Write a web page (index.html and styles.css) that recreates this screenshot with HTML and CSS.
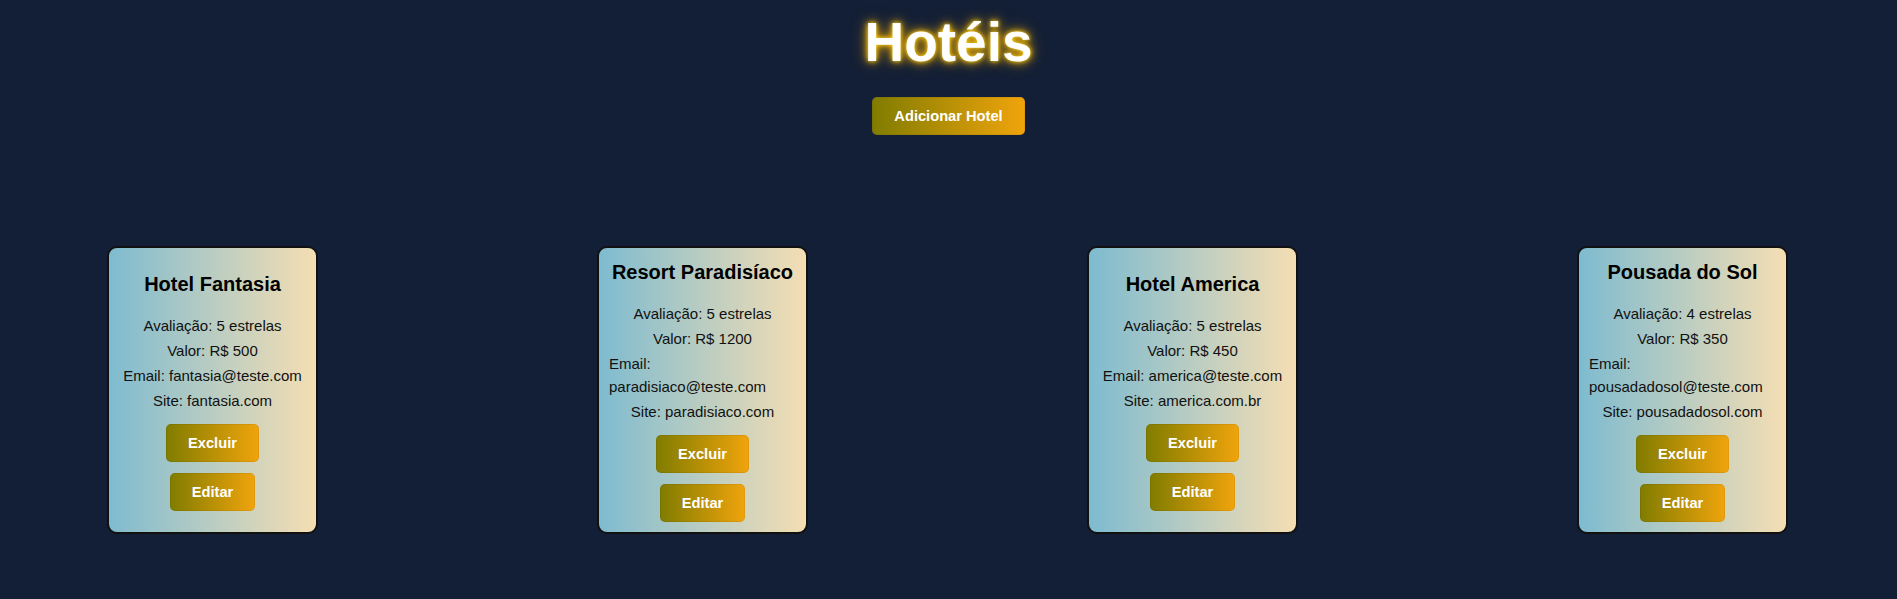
FILE: index.html
```html
<!DOCTYPE html>
<html lang="pt-BR">
<head>
<meta charset="utf-8">
<title>Hotéis</title>
<link rel="stylesheet" href="styles.css">
</head>
<body>
  <header class="header">
    <h1 class="title">Hotéis</h1>
    <button class="btn">Adicionar Hotel</button>
  </header>
  <main class="hotel-list">
    <div class="card">
      <h2 class="card-title">Hotel Fantasia</h2>
      <p class="card-line">Avaliação: 5 estrelas</p>
      <p class="card-line">Valor: R$ 500</p>
      <p class="card-line">Email: fantasia@teste.com</p>
      <p class="card-line">Site: fantasia.com</p>
      <div class="actions">
        <button class="btn">Excluir</button>
        <button class="btn">Editar</button>
      </div>
    </div>
    <div class="card">
      <h2 class="card-title">Resort Paradisíaco</h2>
      <p class="card-line">Avaliação: 5 estrelas</p>
      <p class="card-line">Valor: R$ 1200</p>
      <p class="card-line">Email: paradisiaco@teste.com</p>
      <p class="card-line">Site: paradisiaco.com</p>
      <div class="actions">
        <button class="btn">Excluir</button>
        <button class="btn">Editar</button>
      </div>
    </div>
    <div class="card">
      <h2 class="card-title">Hotel America</h2>
      <p class="card-line">Avaliação: 5 estrelas</p>
      <p class="card-line">Valor: R$ 450</p>
      <p class="card-line">Email: america@teste.com</p>
      <p class="card-line">Site: america.com.br</p>
      <div class="actions">
        <button class="btn">Excluir</button>
        <button class="btn">Editar</button>
      </div>
    </div>
    <div class="card">
      <h2 class="card-title">Pousada do Sol</h2>
      <p class="card-line">Avaliação: 4 estrelas</p>
      <p class="card-line">Valor: R$ 350</p>
      <p class="card-line">Email: pousadadosol@teste.com</p>
      <p class="card-line">Site: pousadadosol.com</p>
      <div class="actions">
        <button class="btn">Excluir</button>
        <button class="btn">Editar</button>
      </div>
    </div>
  </main>
</body>
</html>
```
FILE: styles.css
```css
html, body {
  margin: 0;
  padding: 0;
}

body {
  background: #131f36;
  font-family: "Liberation Sans", Arial, sans-serif;
  color: #111;
  min-height: 599px;
}

.header {
  display: flex;
  flex-direction: column;
  align-items: center;
}

.title {
  margin: 11px 0 0;
  font-size: 55px;
  font-weight: bold;
  color: #fff;
  line-height: 63px;
  text-shadow: 0 0 4px #ffd21a, 0 0 10px #f5b400, 0 0 16px rgba(230, 160, 0, 0.6);
}

.btn {
  font-family: "Liberation Sans", Arial, sans-serif;
  font-size: 14.67px;
  font-weight: bold;
  line-height: 18px;
  color: #fff;
  padding: 10px 22px;
  border: none;
  border-radius: 5px;
  background: linear-gradient(to right, #807c00, #f0a40c);
  box-shadow: inset 0 0 0 1px rgba(0, 0, 0, 0.06);
  cursor: pointer;
}

.header .btn {
  margin-top: 23px;
}

.hotel-list {
  display: flex;
  justify-content: space-between;
  align-items: stretch;
  padding: 0 109px 0 107px;
  margin-top: 111px;
}

.card {
  width: 187px;
  padding: 10px;
  border: 2px solid #111;
  border-radius: 10px;
  background: linear-gradient(to right, #7ebbd0, #f5deb3);
  display: flex;
  flex-direction: column;
  align-items: center;
  justify-content: center;
}

.card-title {
  margin: 3px 0 17px;
  font-size: 20px;
  font-weight: bold;
  color: #000;
  line-height: 23px;
}

.card-line {
  margin: 1px 0;
  font-size: 15px;
  line-height: 23px;
  color: #111;
}

.actions {
  display: flex;
  flex-direction: column;
  align-items: center;
  gap: 11px;
  margin-top: 11px;
}
```
